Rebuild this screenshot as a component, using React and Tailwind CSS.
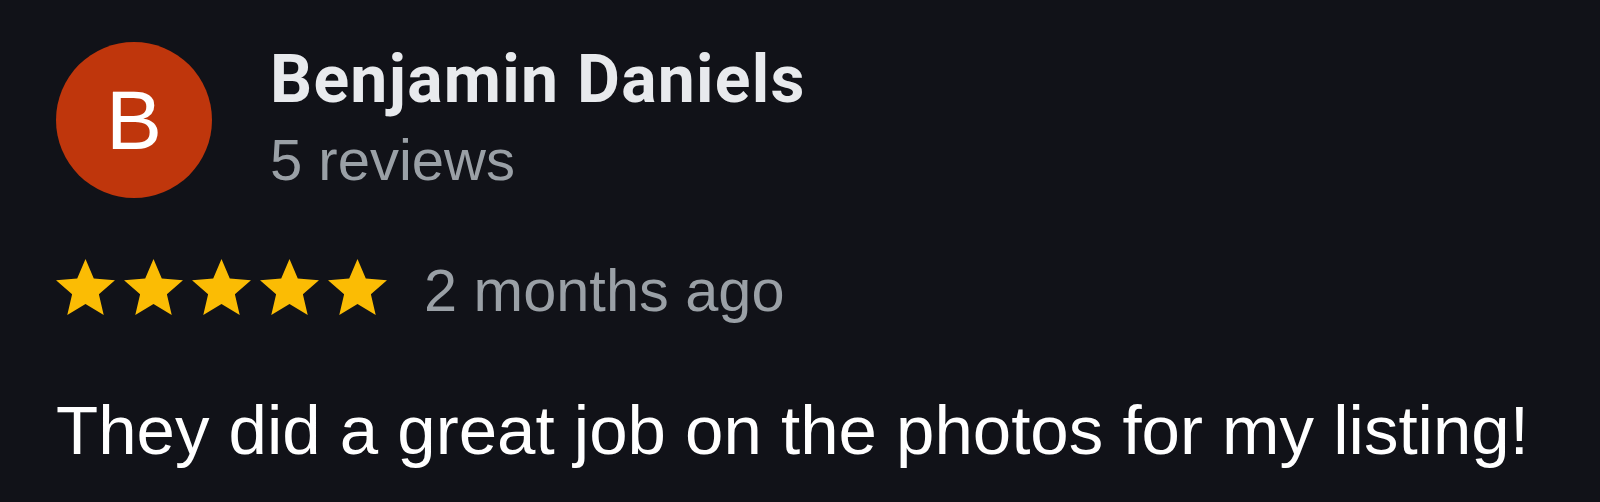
const Star = () => (
  <svg viewBox="2 2 20 19" className="w-[59px] h-[56px]" fill="#fbbc04">
    <path d="M12 17.27L18.18 21l-1.64-7.03L22 9.24l-7.19-.61L12 2 9.19 8.63 2 9.24l5.46 4.73L5.82 21z" />
  </svg>
);

const App = () => {
  return (
    <div className="min-h-screen w-full bg-[#111218] px-[56px] pt-[42px] font-['Liberation_Sans',Arial,sans-serif]">
      {/* Reviewer */}
      <div className="flex items-start gap-[58px]">
        <div className="w-[156px] h-[156px] rounded-full bg-[#bf360c] flex items-center justify-center text-white text-[84px] leading-none">
          B
        </div>
        <div className="flex flex-col">
          <span className="font-['Roboto',sans-serif] font-bold text-[66px] leading-[76px] tracking-[1.3px] text-[#e8eaed]">
            Benjamin Daniels
          </span>
          <span className="mt-[4px] text-[58px] leading-[76px] text-[#9aa0a6]">5 reviews</span>
        </div>
      </div>

      {/* Rating */}
      <div className="mt-[61px] flex items-start gap-[37px]">
        <div className="flex gap-[9px]">
          <Star />
          <Star />
          <Star />
          <Star />
          <Star />
        </div>
        <span className="text-[59.5px] leading-[64px] text-[#9aa0a6]">2 months ago</span>
      </div>

      {/* Review text */}
      <p className="mt-[68px] text-[69px] leading-[80px] text-white whitespace-nowrap">
        They did a great job on the photos for my listing!
      </p>
    </div>
  );
};

export default App;
